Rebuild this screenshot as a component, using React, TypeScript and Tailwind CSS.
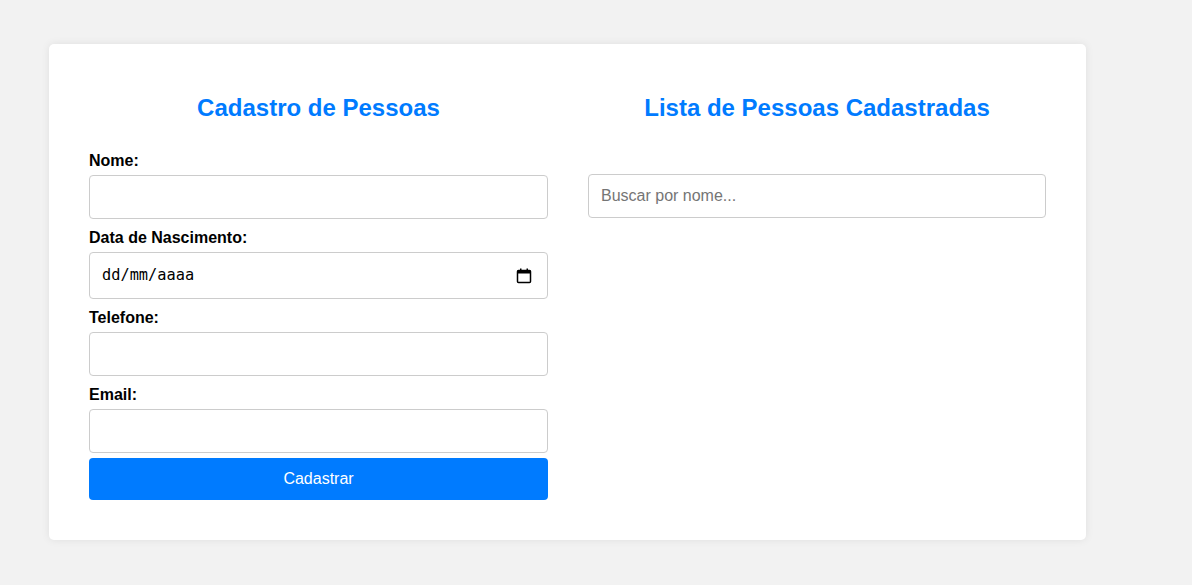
import React, { useState } from "react";

function CalendarIcon() {
  return (
    <svg width="16" height="16" viewBox="0 0 16 16" className="shrink-0">
      <rect x="1.5" y="2.5" width="13" height="12" rx="1" fill="none" stroke="#000" strokeWidth="1.5" />
      <rect x="1.5" y="2.5" width="13" height="3" fill="#000" />
      <rect x="4" y="0.5" width="1.5" height="3" fill="#000" />
      <rect x="10.5" y="0.5" width="1.5" height="3" fill="#000" />
    </svg>
  );
}

function App() {
  const [nome, setNome] = useState("");
  const [telefone, setTelefone] = useState("");
  const [email, setEmail] = useState("");
  const [busca, setBusca] = useState("");

  const inputClass =
    "w-full h-[44px] px-[12px] border border-[#cccccc] rounded-[4px] bg-white text-[16px] text-black outline-none placeholder:text-[#757575]";
  const labelClass = "text-[16px] leading-[18px] font-bold text-black pt-[1px] mb-[5px]";

  return (
    <div className="min-h-screen w-full bg-[#f2f2f2] pt-[44px] pl-[49px] font-['Liberation_Sans',Arial,sans-serif]">
      <div className="w-[1037px] bg-white rounded-[5px] shadow-[0_0_8px_rgba(0,0,0,0.08)] px-[40px] pt-[50px] pb-[40px] flex gap-[40px]">
        <div className="w-[459px]">
          <h2 className="text-center text-[24px] leading-[28px] font-bold text-[#007bff]">
            Cadastro de Pessoas
          </h2>
          <form className="flex flex-col mt-[29px]" onSubmit={(e) => e.preventDefault()}>
            <label className={labelClass}>Nome:</label>
            <input className={inputClass} value={nome} onChange={(e) => setNome(e.target.value)} />

            <label className={labelClass + " mt-[9px]"}>Data de Nascimento:</label>
            <div className="w-full h-[47px] pl-[12px] pr-[15px] border border-[#cccccc] rounded-[4px] bg-white flex items-center justify-between">
              <span className="text-[15.3px] text-black font-['DejaVu_Sans_Mono',monospace]">dd/mm/aaaa</span>
              <CalendarIcon />
            </div>

            <label className={labelClass + " mt-[9px]"}>Telefone:</label>
            <input className={inputClass} value={telefone} onChange={(e) => setTelefone(e.target.value)} />

            <label className={labelClass + " mt-[9px]"}>Email:</label>
            <input className={inputClass} value={email} onChange={(e) => setEmail(e.target.value)} />

            <button
              type="submit"
              className="mt-[5px] h-[42px] w-full rounded-[4px] bg-[#007bff] text-white text-[16px]"
            >
              Cadastrar
            </button>
          </form>
        </div>

        <div className="w-[458px]">
          <h2 className="text-center text-[24px] leading-[28px] font-bold text-[#007bff]">
            Lista de Pessoas Cadastradas
          </h2>
          <input
            className={inputClass + " mt-[52px]"}
            placeholder="Buscar por nome..."
            value={busca}
            onChange={(e) => setBusca(e.target.value)}
          />
        </div>
      </div>
    </div>
  );
}

export default App;
